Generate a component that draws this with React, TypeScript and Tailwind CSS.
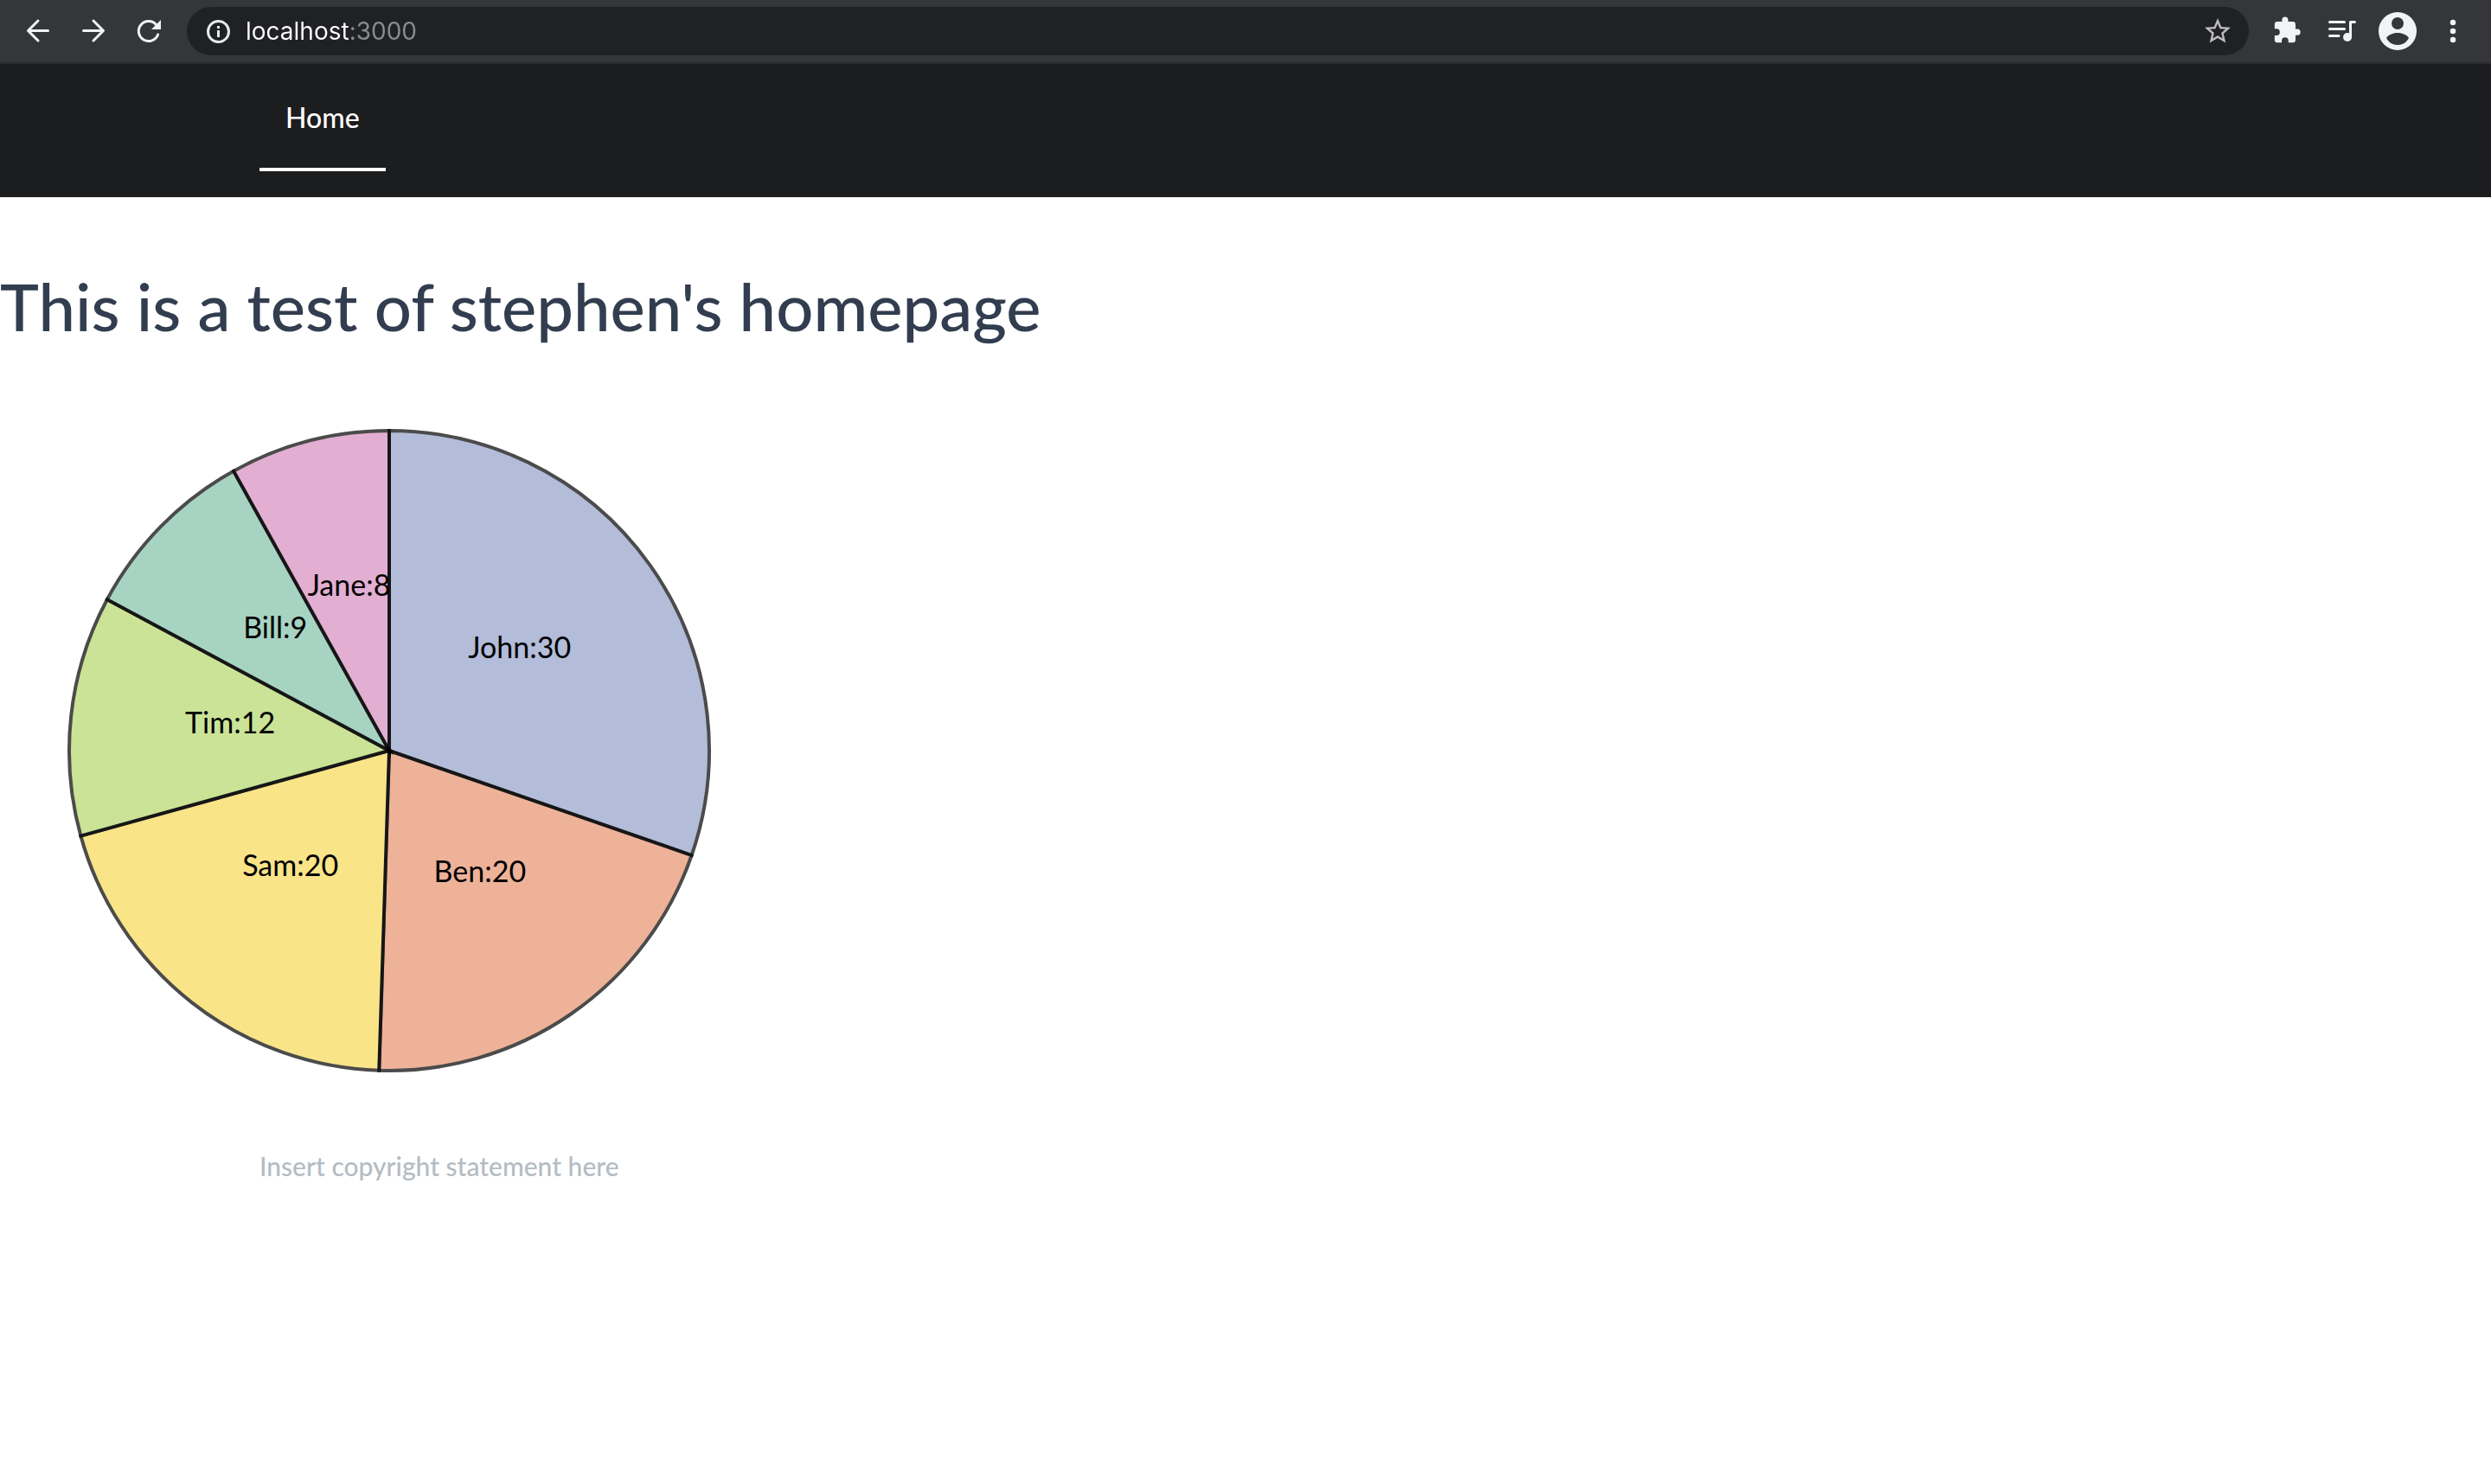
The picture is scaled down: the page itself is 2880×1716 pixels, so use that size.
import type { ReactNode } from 'react';

type Slice = { name: string; value: number; color: string };

const slices: Slice[] = [
  { name: 'John', value: 30, color: '#93a0c8' },
  { name: 'Ben', value: 20, color: '#e8926f' },
  { name: 'Sam', value: 20, color: '#f7d956' },
  { name: 'Tim', value: 12, color: '#b4d86a' },
  { name: 'Bill', value: 9, color: '#82c1a9' },
  { name: 'Jane', value: 8, color: '#d78ec0' },
];

function IconButton({ label, children }: { label: string; children: ReactNode }) {
  return (
    <button type="button" aria-label={label} className="flex h-12 w-12 shrink-0 items-center justify-center text-[#f1f3f4]">
      <svg viewBox="0 0 48 48" className="h-12 w-12" fill="none" stroke="none">
        {children}
      </svg>
    </button>
  );
}

function BrowserBar() {
  return (
    <div className="flex h-[74px] items-center gap-5 border-b-2 border-[#292a2b] bg-[#35363a] px-5">
      <div className="flex gap-4">
        <IconButton label="Back">
          <path d="M35.5 23.5H13M24 12 12.5 23.5 24 35" stroke="currentColor" strokeWidth="3" strokeLinecap="round" strokeLinejoin="round" />
        </IconButton>
        <IconButton label="Forward">
          <path d="M12.5 23.5H35M24 12l11.500 11.500L24 35" stroke="currentColor" strokeWidth="3" strokeLinecap="round" strokeLinejoin="round" />
        </IconButton>
        <IconButton label="Reload">
          <path d="M34.600 28A11.500 11.500 0 1 1 32.500 16.500" stroke="currentColor" strokeWidth="3" strokeLinecap="round" />
          <path d="M38 11v11H27z" fill="currentColor" />
        </IconButton>
      </div>
      <div className="flex h-14 min-w-0 flex-1 items-center rounded-full bg-[#202124] pr-3 pl-3">
        <IconButton label="Site information">
          <circle cx="24.500" cy="24.500" r="12" stroke="#e8eaed" strokeWidth="3" />
          <path d="M23 23h3v8h-3zM23 18h3v3h-3z" fill="#e8eaed" />
        </IconButton>
        <input
          aria-label="Address"
          defaultValue="localhost:3000"
          className="ml-2 h-full min-w-0 flex-1 bg-[linear-gradient(to_right,#ffffff_121px,#8b8c8e_121px)] bg-clip-text font-['Inter',sans-serif] text-[28px] text-transparent caret-white outline-none"
        />
        <IconButton label="Bookmark">
          <path
            transform="translate(6 6) scale(1.5)"
            fill="#bdbdbe"
            d="m22 9.240-7.190-.62L12 2 9.190 8.630 2 9.240l5.460 4.730L5.820 21 12 17.270 18.180 21l-1.630-7.030zM12 15.400l-3.760 2.270 1-4.280-3.320-2.880 4.380-.38L12 6.100l1.710 4.040 4.380.38-3.320 2.880 1 4.280z"
          />
        </IconButton>
      </div>
      <div className="flex gap-4">
        <IconButton label="Extensions">
          <path
            transform="translate(7 6) scale(1.42)"
            fill="currentColor"
            d="M20.500 11H19V7c0-1.100-.9-2-2-2h-4V3.500a2.500 2.500 0 0 0-5 0V5H4c-1.100 0-1.990.9-1.990 2v3.800H3.500a2.700 2.700 0 0 1 0 5.400H2V20c0 1.100.9 2 2 2h3.800v-1.500a2.700 2.700 0 0 1 5.400 0V22H17c1.100 0 2-.9 2-2v-4h1.500a2.500 2.500 0 0 0 0-5z"
          />
        </IconButton>
        <IconButton label="Media controls">
          <path d="M9.500 13.500h17M9.500 21.500h17M9.500 29.500H20" stroke="currentColor" strokeWidth="3" strokeLinecap="round" />
          <circle cx="30" cy="31" r="5" fill="currentColor" />
          <path d="M33.500 31V13.500h5" stroke="currentColor" strokeWidth="3" strokeLinecap="round" strokeLinejoin="round" />
        </IconButton>
        <IconButton label="Profile">
          <circle cx="24" cy="24" r="22" fill="currentColor" />
          <circle cx="24" cy="15" r="7" fill="#35363a" />
          <path d="M11 32c2-3.500 7.500-6 13-6s11 2.500 13 6c-2.500 5-7.500 8-13 8s-10.500-3-13-8z" fill="#35363a" />
        </IconButton>
        <IconButton label="Menu">
          <path d="M24 14h.01M24 24h.01M24 34h.01" stroke="currentColor" strokeWidth="6.500" strokeLinecap="round" />
        </IconButton>
      </div>
    </div>
  );
}

function PieChart() {
  const radius = 370;
  const total = slices.reduce((sum, s) => sum + s.value, 0);
  let angle = 0;
  const arcs = slices.map((s) => {
    const start = angle;
    const end = start + (s.value / total) * Math.PI * 2;
    angle = end;
    const mid = (start + end) / 2;
    const at = (a: number, r: number) => `${Math.sin(a) * r} ${-Math.cos(a) * r}`;
    return {
      ...s,
      d: `M${at(start, radius)}A${radius} ${radius} 0 0 1 ${at(end, radius)}L0 0Z`,
      x: (Math.sin(mid) * radius) / 2,
      y: (-Math.cos(mid) * radius) / 2,
    };
  });
  return (
    <svg viewBox="-450 -450 900 900" className="block h-[900px] w-[900px]" role="img" aria-label="Pie chart">
      {arcs.map((a) => (
        <path key={a.name} d={a.d} fill={a.color} stroke="black" strokeWidth="4" opacity="0.7" />
      ))}
      {arcs.map((a) => (
        <text key={a.name} x={a.x} y={a.y} textAnchor="middle" className="fill-black text-[34px]">
          {a.name}:{a.value}
        </text>
      ))}
    </svg>
  );
}

export default function App() {
  return (
    <div className="min-h-screen bg-white font-['Lato',sans-serif]">
      <BrowserBar />
      <nav className="flex h-[154px] bg-[#1c1d1e] px-[300px] py-[30px]">
        <a href="#home" className="flex items-start border-b-4 border-white px-[30px] pt-3 text-[32px] leading-10 font-medium text-white">
          Home
        </a>
      </nav>
      <main>
        <h1 className="pt-[82px] pb-5 text-[76px] leading-[88px] font-medium text-[#323d4f]">This is a test of stephen's homepage</h1>
        <PieChart />
      </main>
      <footer className="px-[300px] py-[10px] text-[30px] leading-[40px] font-medium text-[#b4bcc2]">Insert copyright statement here</footer>
    </div>
  );
}
